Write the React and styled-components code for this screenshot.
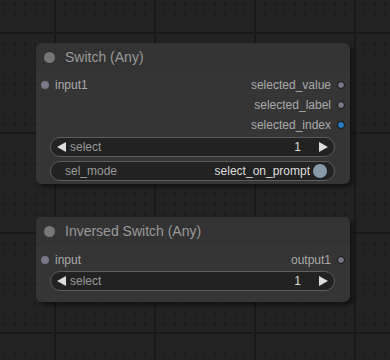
import React from "react"
import styled, { createGlobalStyle } from "styled-components"

const GlobalStyle = createGlobalStyle`
  html, body {
    margin: 0;
    padding: 0;
    background: #222;
  }
`

const Canvas = styled.div`
  position: relative;
  width: 390px;
  height: 360px;
  overflow: hidden;
  font-family: "Liberation Sans", Arial, sans-serif;
  background-color: #232323;
  background-image:
    linear-gradient(to right, #191919 2px, transparent 2px),
    linear-gradient(to bottom, #191919 2px, transparent 2px),
    radial-gradient(circle, #1a1a1a 1.3px, transparent 1.6px);
  background-size: 100px 100px, 100px 100px, 10px 10px;
  background-position: 54px 0, 0 32px, 0 -1px;
`

const Node = styled.div`
  position: absolute;
  left: ${props => props.x}px;
  top: ${props => props.y}px;
  width: 314px;
  height: ${props => props.h}px;
  background: #353535;
  border-radius: 6px;
  box-shadow: 3px 3px 5px rgba(0, 0, 0, 0.55);
  display: flex;
  flex-direction: column;
`

const Title = styled.div`
  height: 28px;
  display: flex;
  align-items: center;
  padding-left: 8px;
  gap: 10px;
  background: #333;
  border-radius: 6px 6px 0 0;
`

const TitleDot = styled.span`
  width: 11px;
  height: 11px;
  border-radius: 50%;
  background: #777;
`

const TitleText = styled.span`
  font-size: 14px;
  color: #999;
`

const Body = styled.div`
  display: flex;
  flex-direction: column;
  padding-top: ${props => props.top}px;
`

const SlotRow = styled.div`
  height: 20px;
  display: flex;
  align-items: center;
  justify-content: space-between;
  padding: 0 5px;
`

const Slot = styled.div`
  display: flex;
  align-items: center;
  gap: 6px;
  font-size: 12px;
  color: #aaa;
  margin-left: ${props => (props.out ? "auto" : "0")};
`

const SlotDot = styled.span`
  width: 8px;
  height: 8px;
  box-sizing: border-box;
  border-radius: 50%;
  background: ${props => props.color || "#778"};
  border: ${props => (props.out ? "1px solid #111" : "none")};
`

const Widgets = styled.div`
  display: flex;
  flex-direction: column;
  gap: 4px;
  margin: ${props => props.top}px 15px 0 14px;
`

const Widget = styled.div`
  height: 20px;
  box-sizing: border-box;
  display: flex;
  align-items: center;
  background: #222;
  border: 1px solid #5c5c5c;
  border-radius: 10px;
  font-size: 12px;
  padding: 0 ${props => props.pr || 6}px 0 ${props => props.pl || 6}px;
`

const Arrow = styled.span`
  width: 0;
  height: 0;
  border-top: 5px solid transparent;
  border-bottom: 5px solid transparent;
  ${props =>
    props.right
      ? "border-left: 9px solid #ddd;"
      : "border-right: 9px solid #ddd;"}
`

const Label = styled.span`
  color: #999;
  margin-left: ${props => props.ml || 0}px;
`

const Value = styled.span`
  color: #ddd;
  margin-left: auto;
  margin-right: ${props => props.mr || 0}px;
`

const Knob = styled.span`
  width: 14px;
  height: 14px;
  border-radius: 50%;
  background: #89a;
  margin-left: 3px;
`

const ComboWidget = ({ label, value }) => (
  <Widget pl={6} pr={6}>
    <Arrow />
    <Label ml={4}>{label}</Label>
    <Value mr={18}>{value}</Value>
    <Arrow right />
  </Widget>
)

const ToggleWidget = ({ label, value }) => (
  <Widget pl={14} pr={7}>
    <Label>{label}</Label>
    <Value>{value}</Value>
    <Knob />
  </Widget>
)

const App = () => (
  <>
    <GlobalStyle />
    <Canvas>
      <Node x={36} y={43} h={141}>
        <Title>
          <TitleDot />
          <TitleText>Switch (Any)</TitleText>
        </Title>
        <Body top={4}>
          <SlotRow>
            <Slot>
              <SlotDot />
              input1
            </Slot>
            <Slot out>
              selected_value
              <SlotDot out />
            </Slot>
          </SlotRow>
          <SlotRow>
            <Slot out>
              selected_label
              <SlotDot out />
            </Slot>
          </SlotRow>
          <SlotRow>
            <Slot out>
              selected_index
              <SlotDot out color="#2b7cc0" />
            </Slot>
          </SlotRow>
          <Widgets top={2}>
            <ComboWidget label="select" value="1" />
            <ToggleWidget label="sel_mode" value="select_on_prompt" />
          </Widgets>
        </Body>
      </Node>

      <Node x={36} y={217} h={85}>
        <Title>
          <TitleDot />
          <TitleText>Inversed Switch (Any)</TitleText>
        </Title>
        <Body top={5}>
          <SlotRow>
            <Slot>
              <SlotDot />
              input
            </Slot>
            <Slot out>
              output1
              <SlotDot out />
            </Slot>
          </SlotRow>
          <Widgets top={1}>
            <ComboWidget label="select" value="1" />
          </Widgets>
        </Body>
      </Node>
    </Canvas>
  </>
)

export default App
